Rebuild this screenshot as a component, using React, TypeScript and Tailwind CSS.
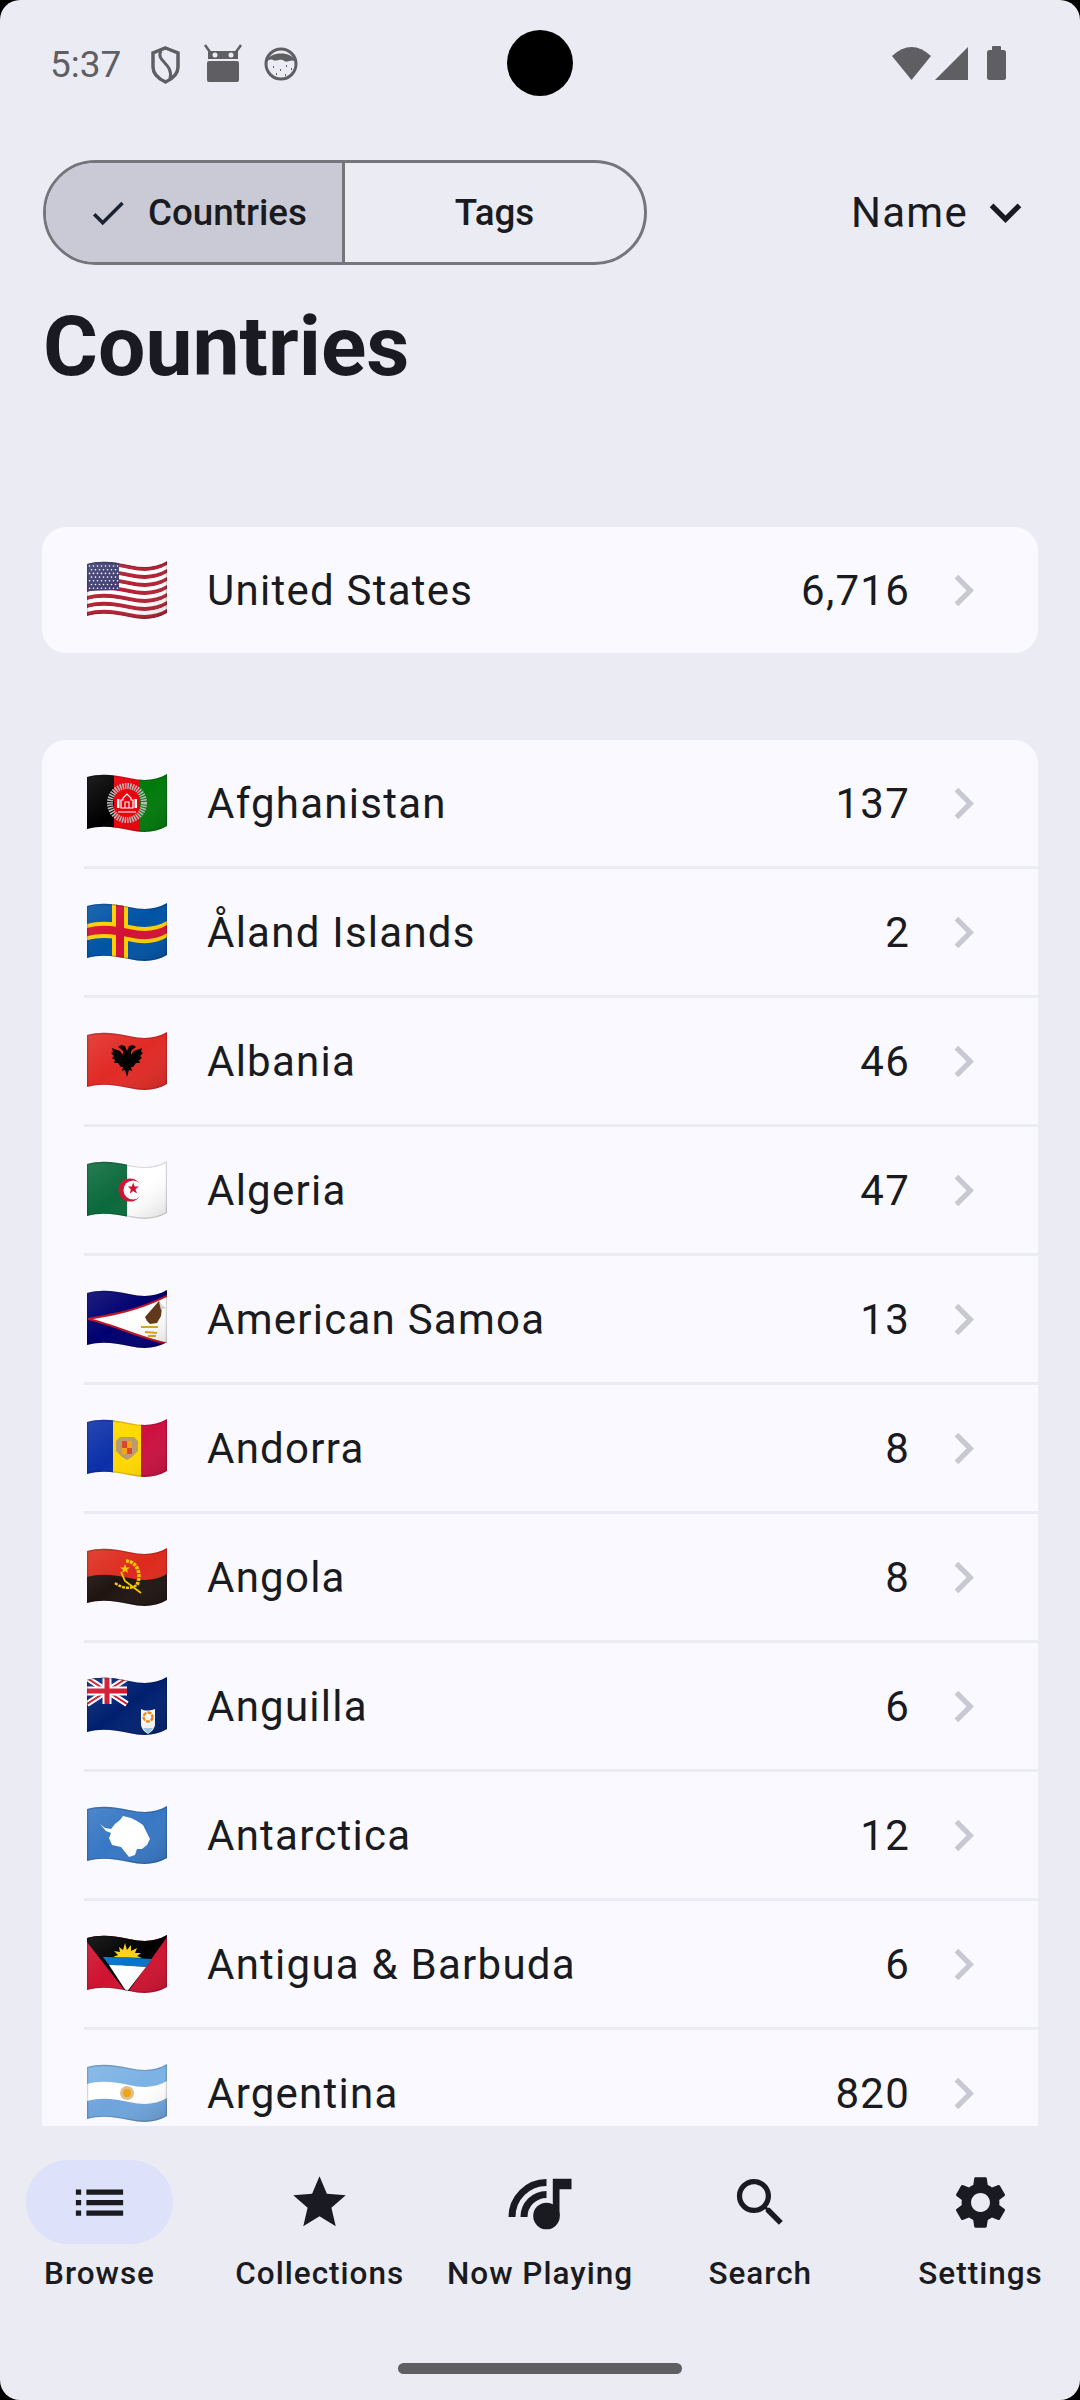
const countries = [
  { code: 'af', name: 'Afghanistan', count: '137' },
  { code: 'ax', name: 'Åland Islands', count: '2' },
  { code: 'al', name: 'Albania', count: '46' },
  { code: 'dz', name: 'Algeria', count: '47' },
  { code: 'as', name: 'American Samoa', count: '13' },
  { code: 'ad', name: 'Andorra', count: '8' },
  { code: 'ao', name: 'Angola', count: '8' },
  { code: 'ai', name: 'Anguilla', count: '6' },
  { code: 'aq', name: 'Antarctica', count: '12' },
  { code: 'ag', name: 'Antigua & Barbuda', count: '6' },
  { code: 'ar', name: 'Argentina', count: '820' },
];

// wavy strip across the flag, top edge at y0 and bottom edge at y1
function band(y0: number, y1: number) {
  const top = `M0 ${y0} C14 ${y0 - 4} 28 ${y0 - 2} 42 ${y0 + 1} S68 ${y0 + 4} 80 ${y0 - 3}`;
  const bottom = `V${y1 - 3} C68 ${y1 + 4} 56 ${y1 + 4} 42 ${y1 + 1} C28 ${y1 - 2} 14 ${y1 - 4} 0 ${y1} Z`;
  return top + ' ' + bottom;
}

const FLAG_TOP = 4;
const FLAG_BOTTOM = 56;

function stripes(colors: string[], start = FLAG_TOP - 6, end = FLAG_BOTTOM + 6) {
  const h = (end - start) / colors.length;
  return colors.map((c, i) => <path key={i} d={band(start + i * h, start + (i + 1) * h + 0.3)} fill={c} />);
}

function UnionJack() {
  return (
    <g>
      <rect x="0" y="0" width="40" height="28" fill="#00247d" />
      <path d="M0 2 L40 28 M40 2 L0 28" stroke="#fff" strokeWidth="6" />
      <path d="M0 2 L40 28 M40 2 L0 28" stroke="#cf142b" strokeWidth="2" />
      <path d="M20 0 V28 M0 15 H40" stroke="#fff" strokeWidth="9" />
      <path d="M20 0 V28 M0 15 H40" stroke="#cf142b" strokeWidth="5" />
    </g>
  );
}

function FlagArt({ code }: { code: string }) {
  switch (code) {
    case 'us': {
      const dots = [];
      for (let r = 0; r < 7; r++) {
        for (let c = 0; c < 8; c++) {
          dots.push(<circle key={`${r}-${c}`} cx={2.5 + c * 4 + (r % 2) * 2} cy={6 + r * 3.7} r="0.8" fill="#fff" />);
        }
      }
      return (
        <g>
          {stripes(['#b22234', '#fff', '#b22234', '#fff', '#b22234', '#fff', '#b22234', '#fff', '#b22234', '#fff', '#b22234', '#fff', '#b22234'], FLAG_TOP, FLAG_BOTTOM)}
          <path d="M0 0 H32 V30 L0 31 Z" fill="#3c3b6e" />
          {dots}
        </g>
      );
    }
    case 'af':
      return (
        <g>
          <rect width="27" height="60" fill="#000" />
          <rect x="27" width="27" height="60" fill="#e8000b" />
          <rect x="53" width="27" height="60" fill="#007a0a" />
          <circle cx="40" cy="30" r="17" fill="none" stroke="#b9b9b9" strokeWidth="6" strokeDasharray="1.5 1" />
          <path d="M34 35 V27 H36 V25 L40 21 L44 25 V27 H46 V35 Z" fill="none" stroke="#fff" strokeWidth="1.2" />
          <path d="M38 35 V29 H42 V35 M31 39 H49" fill="none" stroke="#fff" strokeWidth="1.1" />
          <rect x="30" y="26" width="2.5" height="9" fill="#fff" />
          <rect x="47.5" y="26" width="2.5" height="9" fill="#fff" />
        </g>
      );
    case 'ax':
      return (
        <g>
          <rect width="80" height="60" fill="#0053a5" />
          {stripes(['#ffce00'], 22, 38)}
          <rect x="25" width="16" height="60" fill="#ffce00" />
          {stripes(['#d21034'], 26, 34)}
          <rect x="29" width="8" height="60" fill="#d21034" />
        </g>
      );
    case 'al':
      return (
        <g>
          <rect width="80" height="60" fill="#e12a25" />
          <path
            d="M40 20 L42 15 L46 14 L49 16 L46 18 L44 20 L44 24 L47 20 L55 17 L54 21 L56 22 L53 25 L55 27 L52 29 L53 32 L49 32 L46 36 L44 36 L45 40 L42 39 L40 46 L38 39 L35 40 L36 36 L34 36 L31 32 L27 32 L28 29 L25 27 L27 25 L24 22 L26 21 L25 17 L33 20 L36 24 L36 20 L34 18 L31 16 L34 14 L38 15 Z"
            fill="#000"
          />
        </g>
      );
    case 'dz':
      return (
        <g>
          <rect width="80" height="60" fill="#fff" />
          <rect width="40" height="60" fill="#0a6a3b" />
          <circle cx="43" cy="30" r="11.5" fill="#d21034" />
          <circle cx="46" cy="30" r="9.5" fill="#fff" />
          <path d="M46 24 L47.6 28 L52 28 L48.5 31 L50 35.4 L46 32.8 L42.5 35.4 L43.6 31 L40.5 28 L44.6 28 Z" fill="#d21034" transform="translate(2 -0.5) scale(0.96)" />
        </g>
      );
    case 'as':
      return (
        <g>
          <rect width="80" height="60" fill="#00006f" />
          <path d="M1 30 C25 26 50 22 82 6 V55 C55 50 28 36 1 30 Z" fill="#fff" stroke="#bd1021" strokeWidth="2" />
          <path d="M58 28 L72 12 L75 18 L74 27 L70 34 L63 35 L60 32 Z" fill="#5e3315" />
          <path d="M72 13 L79 19 L74 21 Z" fill="#d7d7d7" />
          <path d="M54 38 H71 M58 43 L70 44 M61 47 H69" stroke="#d9a521" strokeWidth="2" fill="none" />
        </g>
      );
    case 'ad':
      return (
        <g>
          <rect width="27" height="60" fill="#0a2fa8" />
          <rect x="26" width="29" height="60" fill="#ffd800" />
          <rect x="54" width="26" height="60" fill="#cc1040" />
          <path d="M29 23 L33 19 H47 L51 23 V33 L45 39 L40 42 L35 39 L29 33 Z" fill="#b79c6c" />
          <rect x="35" y="23" width="5" height="7" fill="#d8442f" />
          <rect x="40" y="23" width="5" height="7" fill="#f2a516" />
          <rect x="35" y="30" width="5" height="6" fill="#f2a516" />
          <rect x="40" y="30" width="5" height="6" fill="#d8442f" />
        </g>
      );
    case 'ao':
      return (
        <g>
          {stripes(['#dd2a1c'], -4, 31)}
          {stripes(['#1f1410'], 30, 62)}
          <path d="M39 14 C50 14 55 27 50 38" fill="none" stroke="#f5c800" strokeWidth="3.5" strokeDasharray="3 1" />
          <path d="M28 36 C36 42 44 42 50 38" fill="none" stroke="#f5c800" strokeWidth="2.5" strokeDasharray="3 1" />
          <path d="M34 25 L38 34 L54 46" fill="none" stroke="#f5c800" strokeWidth="1.8" />
          <path d="M38 17 L39.3 20.5 L43 20.5 L40 22.7 L41 26 L38 24 L35 26 L36 22.7 L33 20.5 L36.7 20.5 Z" fill="#f5c800" />
        </g>
      );
    case 'ai':
      return (
        <g>
          <rect width="80" height="60" fill="#00206f" />
          <UnionJack />
          <path d="M54 33 C58 35 62 35 68 33 V49 C67 54 64 56 61 58 C58 56 55 54 54 49 Z" fill="#fff" />
          <path d="M56 52 H66 L61 58 Z" fill="#9fd1ef" />
          <circle cx="61" cy="41" r="4.5" fill="none" stroke="#f08a12" strokeWidth="2.4" strokeDasharray="4 1" />
        </g>
      );
    case 'aq':
      return (
        <g>
          <rect width="80" height="60" fill="#3777c4" />
          <path
            d="M13 19 L18 23 L24 24 L28 19 L33 15 L36 11 L44 13 L50 16 L56 20 L60 28 L63 34 L60 40 L55 44 L50 44 L48 50 L42 52 L38 47 L34 42 L25 40 L22 33 L24 28 L19 26 Z"
            fill="#fff"
          />
        </g>
      );
    case 'ag':
      return (
        <g>
          <rect width="80" height="60" fill="#cf1230" />
          <path d="M0 0 H80 V3 L41 58 L39 58 L0 8 Z" fill="#000" />
          <path d="M16 23 C30 23 50 24 65 25 L59 33 C45 32 32 31 22 31 Z" fill="#0a72c4" />
          <path d="M22 31 C32 31 45 32 59 33 L40.5 57 L39 57 Z" fill="#fff" />
          <path d="M26 23 L31 21 L27 17 L33 18 L32 13 L36 16 L38 9 L40 16 L44 11 L44 17 L50 14 L48 19 L54 19 L50 22 L55 24 Z" fill="#fcd116" />
        </g>
      );
    case 'ar':
      return (
        <g>
          {stripes(['#7cb2e4'], -2, 22)}
          {stripes(['#fff'], 21, 39)}
          {stripes(['#6ea4dc'], 38, 62)}
          <circle cx="40" cy="30" r="7" fill="#c98a28" opacity="0.55" />
          <circle cx="40" cy="30" r="4" fill="#eda415" />
        </g>
      );
    default:
      return null;
  }
}

function Flag({ code }: { code: string }) {
  const outline = band(FLAG_TOP, FLAG_BOTTOM);
  return (
    <svg width="80" height="60" viewBox="0 0 80 60" className="shrink-0">
      <defs>
        <clipPath id={`clip-${code}`}>
          <path d={outline} />
        </clipPath>
        <linearGradient id={`shade-${code}`} x1="0" y1="0" x2="1" y2="1">
          <stop offset="0" stopColor="#fff" stopOpacity="0.12" />
          <stop offset="0.5" stopColor="#fff" stopOpacity="0" />
          <stop offset="1" stopColor="#000" stopOpacity="0.14" />
        </linearGradient>
      </defs>
      <g clipPath={`url(#clip-${code})`}>
        <FlagArt code={code} />
        <path d={outline} fill={`url(#shade-${code})`} />
        <path d={outline} fill="none" stroke="#000" strokeOpacity="0.16" strokeWidth="2.5" />
      </g>
    </svg>
  );
}

function Row({ code, name, count }: { code: string; name: string; count: string }) {
  return (
    <div className="flex h-[126px] items-center pl-[45px] pr-[43px]">
      <Flag code={code} />
      <span className="ml-[40px] flex-1 text-[42px] tracking-[1.25px] text-[#1a1b20]">{name}</span>
      <span className="text-[42px] tracking-[1.25px] text-[#1a1b20]">{count}</span>
      <svg width="63" height="63" viewBox="0 0 24 24" fill="#c7c8d2" className="ml-[22px]">
        <path d="M10 6L8.59 7.41 13.17 12l-4.58 4.59L10 18l6-6z" />
      </svg>
    </div>
  );
}

function NowPlayingIcon() {
  return (
    <svg width="64" height="63" viewBox="18.5 10 64 63" fill="#1a1b20">
      <path d="M22.5 56 A34.5 34.5 0 0 1 57 21.5" fill="none" stroke="#1a1b20" strokeWidth="7" />
      <path d="M34.5 56 A22.5 22.5 0 0 1 57 33.5" fill="none" stroke="#1a1b20" strokeWidth="7" />
      <path d="M63.3 17.7 H82 V28.3 H70 V55 H63.3 Z" />
      <circle cx="57" cy="55" r="13.3" />
    </svg>
  );
}

function MaterialIcon({ d }: { d: string }) {
  return (
    <svg width="63" height="63" viewBox="0 0 24 24" fill="#1a1b20">
      <path d={d} />
    </svg>
  );
}

const tabs = [
  { label: 'Browse', icon: <MaterialIcon d="M3 13h2v-2H3v2zm0 4h2v-2H3v2zm0-8h2V7H3v2zm4 4h14v-2H7v2zm0 4h14v-2H7v2zM7 7v2h14V7H7z" /> },
  { label: 'Collections', icon: <MaterialIcon d="M12 17.27L18.18 21l-1.64-7.03L22 9.24l-7.19-.61L12 2 9.19 8.63 2 9.24l5.46 4.73L5.82 21z" /> },
  { label: 'Now Playing', icon: <NowPlayingIcon /> },
  { label: 'Search', icon: <MaterialIcon d="M15.5 14h-.79l-.28-.27C15.41 12.59 16 11.11 16 9.5 16 5.91 13.09 3 9.5 3S3 5.91 3 9.5 5.91 16 9.5 16c1.61 0 3.09-.59 4.23-1.57l.27.28v.79l5 4.99L20.49 19l-4.99-5zm-6 0C7.01 14 5 11.99 5 9.5S7.01 5 9.5 5 14 7.01 14 9.5 11.99 14 9.5 14z" /> },
  { label: 'Settings', icon: <MaterialIcon d="M19.14 12.94c.04-.3.06-.61.06-.94 0-.32-.02-.64-.07-.94l2.03-1.58c.18-.14.23-.41.12-.61l-1.92-3.32c-.12-.22-.37-.29-.59-.22l-2.39.96c-.5-.38-1.03-.7-1.62-.94l-.36-2.54c-.04-.24-.24-.41-.48-.41h-3.84c-.24 0-.43.17-.47.41l-.36 2.54c-.59.24-1.13.57-1.62.94l-2.39-.96c-.22-.08-.47 0-.59.22L2.74 8.87c-.12.21-.08.47.12.61l2.03 1.58c-.05.3-.09.63-.09.94s.02.64.07.94l-2.03 1.58c-.18.14-.23.41-.12.61l1.92 3.32c.12.22.37.29.59.22l2.39-.96c.5.38 1.03.7 1.62.94l.36 2.54c.05.24.24.41.48.41h3.84c.24 0 .44-.17.47-.41l.36-2.54c.59-.24 1.13-.56 1.62-.94l2.39.96c.22.08.47 0 .59-.22l1.92-3.32c.12-.22.07-.47-.12-.61l-2.01-1.58zM12 15.6c-1.98 0-3.6-1.62-3.6-3.6s1.62-3.6 3.6-3.6 3.6 1.62 3.6 3.6-1.62 3.6-3.6 3.6z" /> },
];

export default function App() {
  return (
    <div className="h-[2400px] w-[1080px] overflow-hidden bg-black [font-family:Roboto,sans-serif]">
      <div className="relative flex h-full flex-col overflow-hidden rounded-[20px] bg-[#ebebf4]">
        {/* status bar */}
        <div className="flex h-[128px] shrink-0 items-center pl-[50px] pr-[74px] text-[#5e5e63]">
          <span className="mt-[2px] text-[37px]">5:37</span>
          <svg width="170" height="50" viewBox="0 0 170 50" className="ml-[19px]" fill="#5e5e63">
            <path d="M25.5 9 L38 14 V28 C38 35 32 40 25.5 43 C19 40 13 35 13 28 V14 Z" fill="none" stroke="#5e5e63" strokeWidth="3.5" />
            <path d="M21 12 C15 22 34 24 30 40" fill="none" stroke="#5e5e63" strokeWidth="3" />
            <path d="M65 6 L70 13 M101 6 L96 13" stroke="#5e5e63" strokeWidth="2.5" />
            <path d="M68 12 H98 V20 H68 Z" />
            <circle cx="75" cy="16" r="2.5" fill="#ebebf4" />
            <circle cx="91" cy="16" r="2.5" fill="#ebebf4" />
            <rect x="67" y="22" width="32" height="21" rx="2" />
            <circle cx="141" cy="25" r="15" fill="#ebebf4" stroke="#5e5e63" strokeWidth="3" />
            <path d="M127 22 C129 12 153 12 155 22 C150 20 148 24 144 22 C141 19 136 23 133 21 C131 20 129 21 127 22 Z" />
            <path d="M133 28 h1 M140 31 h1 M146 27 h1 M151 30 h1 M136 35 h1 M145 36 h1" stroke="#5e5e63" strokeWidth="2" />
          </svg>
          <svg width="114" height="36" viewBox="0 0 114 36" className="ml-auto" fill="#5e5e63">
            <path d="M0 10 Q19.5 -8 39 10 L19.5 34 Z" />
            <path d="M43 34 L76 34 L76 1 Z" />
            <rect x="95" y="4" width="19" height="30" rx="2.5" />
            <rect x="100" y="0" width="9" height="6" rx="1" />
          </svg>
        </div>

        {/* camera cutout */}
        <div className="absolute left-[507px] top-[30px] h-[66px] w-[66px] rounded-full bg-black" />

        {/* segmented control + sort */}
        <div className="mt-[32px] flex h-[105px] shrink-0 items-center pl-[43px] pr-[43px]">
          <div className="flex h-full w-[604px] overflow-hidden rounded-full border-[3px] border-[#74757d] text-[36.75px] font-medium text-[#1a1b20]">
            <div className="flex w-[296px] items-center bg-[#c9cad5] pl-[41px]">
              <svg width="42" height="42" viewBox="0 0 24 24" fill="#1a2233">
                <path d="M9 16.17L4.83 12l-1.42 1.41L9 19 21 7l-1.41-1.41z" />
              </svg>
              <span className="ml-[19px]">Countries</span>
            </div>
            <div className="w-[3px] bg-[#74757d]" />
            <div className="flex flex-1 items-center justify-center">Tags</div>
          </div>
          <span className="ml-auto text-[42px] tracking-[1.3px] text-[#1a1b20]">Name</span>
          <svg width="63" height="63" viewBox="0 0 24 24" fill="#1a1b20" className="ml-[6px] shrink-0">
            <path d="M16.59 8.59L12 13.17 7.41 8.59 6 10l6 6 6-6z" />
          </svg>
        </div>

        <h1 className="mt-[38px] h-[88px] shrink-0 pl-[43px] text-[84px] font-bold leading-[88px] text-[#1a1b20]">Countries</h1>

        {/* list */}
        <div className="mx-[42px] mt-[136px] min-h-0 flex-1 overflow-hidden">
          <div className="rounded-[24px] bg-[#f9f9ff]">
            <Row code="us" name="United States" count="6,716" />
          </div>
          <div className="mt-[87px] rounded-t-[24px] bg-[#f9f9ff]">
            {countries.map((c, i) => (
              <div key={c.code}>
                {i > 0 && <div className="ml-[42px] h-[3px] bg-[#ebebf4]" />}
                <Row code={c.code} name={c.name} count={c.count} />
              </div>
            ))}
          </div>
        </div>

        {/* bottom nav */}
        <div className="flex h-[274px] shrink-0 flex-col">
          <div className="mt-[34px] flex justify-between px-[26px]">
            {tabs.map((t, i) => (
              <div key={t.label} className="flex w-[147px] flex-col items-center whitespace-nowrap">
                <div className={`flex h-[84px] w-[147px] items-center justify-center rounded-full ${i === 0 ? 'bg-[#dde1f9]' : ''}`}>
                  {t.icon}
                </div>
                <span className="mt-[9px] text-[31.5px] font-medium leading-[42px] tracking-[1px] text-[#1a1b20]">{t.label}</span>
              </div>
            ))}
          </div>
          <div className="mx-auto mt-auto mb-[26px] h-[11px] w-[284px] rounded-full bg-[#5e5e63]" />
        </div>
      </div>
    </div>
  );
}
